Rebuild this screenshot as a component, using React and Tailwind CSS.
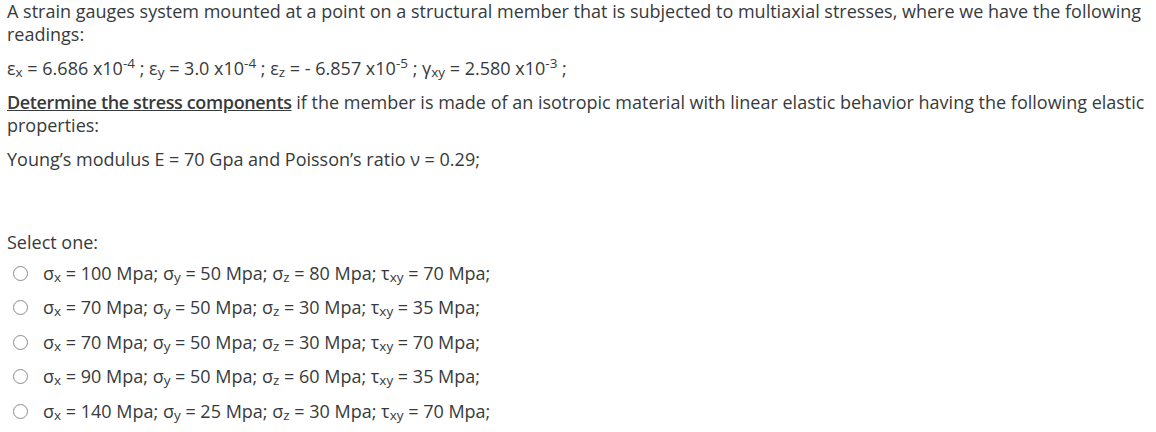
import React from "react";

const options = [
  ["100", "50", "80", "70"],
  ["70", "50", "30", "35"],
  ["70", "50", "30", "70"],
  ["90", "50", "60", "35"],
  ["140", "25", "30", "70"],
];

const Sub = ({ children }) => (
  <sub className="text-[0.75em] relative top-[0.15em] align-baseline leading-none">{children}</sub>
);
const Sup = ({ children }) => (
  <sup className="text-[0.75em] relative -top-[0.55em] align-baseline leading-none">{children}</sup>
);

const App = () => {
  return (
    <div
      className="bg-white text-[#373a3c] text-[18px] leading-[23px] pl-[7px] w-[1156px] h-[432px] overflow-hidden"
      style={{ fontFamily: '"Open Sans", "Liberation Sans", sans-serif' }}
    >
      <div>
        <p className="mb-[11px]">
          A strain gauges system mounted at a point on a structural member that is subjected to multiaxial
          stresses, where we have the following readings:
        </p>
        <p className="mb-[11px]">
          ε<Sub>x</Sub> = 6.686 x10<Sup>-4</Sup> ; ε<Sub>y</Sub> = 3.0 x10<Sup>-4</Sup> ; ε<Sub>z</Sub> = -
          6.857 x10<Sup>-5</Sup> ; γ<Sub>xy</Sub> = 2.580 x10<Sup>-3</Sup> ;
        </p>
        <p className="mb-[11px]">
          <span className="underline font-semibold tracking-[-0.02em]">Determine the stress components</span>{" "}
          if the member is made of an isotropic material with linear elastic behavior having the following
          elastic properties:
        </p>
        <p>Young’s modulus E = 70 Gpa and Poisson’s ratio ν = 0.29;</p>
      </div>

      <div className="mt-[60px]">
        <div className="mb-[2px]">Select one:</div>
        <div className="flex flex-col">
          {options.map((o, i) => (
            <label key={i} className="flex items-center h-[34.5px] pl-[6px]">
              <span className="w-[15px] h-[15px] rounded-full border border-[#8c8c8c] bg-white mr-[15px] shrink-0" />
              <span>
                σ<Sub>x</Sub> = {o[0]} Mpa; σ<Sub>y</Sub> = {o[1]} Mpa; σ<Sub>z</Sub> = {o[2]} Mpa; τ
                <Sub>xy</Sub> = {o[3]} Mpa;
              </span>
            </label>
          ))}
        </div>
      </div>
    </div>
  );
};

export default App;
